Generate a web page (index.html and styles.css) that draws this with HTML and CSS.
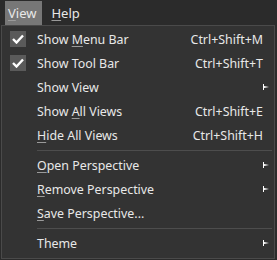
FILE: index.html
```html
<!DOCTYPE html>
<html lang="en">
<head>
    <meta charset="UTF-8">
    <title>View Menu</title>
    <link rel="stylesheet" href="styles.css">
</head>
<body>

<div class="menubar">
    <span class="top-item active"><u>V</u>iew</span>
    <span class="top-item"><u>H</u>elp</span>
</div>

<div class="popup">
    <div class="item">
        <span class="check"><svg width="12" height="10" viewBox="0 0 12 10"><path d="M1 5 L4.5 8.5 L11 1.5" fill="none" stroke="#fff" stroke-width="2.4"/></svg></span>
        <span class="label">Show <u>M</u>enu Bar</span>
        <span class="key">Ctrl+Shift+M</span>
    </div>
    <div class="item">
        <span class="check"><svg width="12" height="10" viewBox="0 0 12 10"><path d="M1 5 L4.5 8.5 L11 1.5" fill="none" stroke="#fff" stroke-width="2.4"/></svg></span>
        <span class="label">Show Tool Bar</span>
        <span class="key">Ctrl+Shift+T</span>
    </div>
    <div class="item">
        <span class="label">Show View</span>
        <span class="arrow"><svg width="6" height="6" viewBox="0 0 6 6"><path d="M0 0 H1 V2 L6 3 L1 4 V6 H0 Z" fill="#fff"/></svg></span>
    </div>
    <div class="item">
        <span class="label">Show <u>A</u>ll Views</span>
        <span class="key">Ctrl+Shift+E</span>
    </div>
    <div class="item">
        <span class="label"><u>H</u>ide All Views</span>
        <span class="key">Ctrl+Shift+H</span>
    </div>
    <div class="separator"></div>
    <div class="item">
        <span class="label"><u>O</u>pen Perspective</span>
        <span class="arrow"><svg width="6" height="6" viewBox="0 0 6 6"><path d="M0 0 H1 V2 L6 3 L1 4 V6 H0 Z" fill="#fff"/></svg></span>
    </div>
    <div class="item">
        <span class="label"><u>R</u>emove Perspective</span>
        <span class="arrow"><svg width="6" height="6" viewBox="0 0 6 6"><path d="M0 0 H1 V2 L6 3 L1 4 V6 H0 Z" fill="#fff"/></svg></span>
    </div>
    <div class="item">
        <span class="label"><u>S</u>ave Perspective...</span>
    </div>
    <div class="separator"></div>
    <div class="item">
        <span class="label">Theme</span>
        <span class="arrow"><svg width="6" height="6" viewBox="0 0 6 6"><path d="M0 0 H1 V2 L6 3 L1 4 V6 H0 Z" fill="#fff"/></svg></span>
    </div>
</div>

</body>
</html>
```

FILE: styles.css
```css
body {
    margin: 0;
    padding: 0;
    width: 277px;
    height: 260px;
    background-color: #2b2b2b;
    font-family: 'Noto Sans', 'Open Sans', Arial, sans-serif;
    font-size: 12.4px;
    color: #e8e8e8;
    overflow: hidden;
}
u {
    text-decoration-color: #9a9a9a;
    text-underline-offset: 2px;
}
.menubar {
    display: flex;
    height: 25px;
    padding-left: 5px;
    gap: 6px;
}
.top-item {
    display: flex;
    align-items: center;
    padding: 0 6px 0 3px;
    margin-top: 1px;
    font-size: 13px;
}
.top-item.active {
    background-color: #777;
}
.popup {
    margin-left: 1px;
    width: 272px;
    height: 231px;
    padding-top: 1px;
    background-color: #333;
    border: 1px solid #4a4a4a;
}
.item {
    display: flex;
    align-items: center;
    height: 24px;
    position: relative;
    padding-left: 35px;
    padding-right: 11px;
}
.label {
    flex: 1;
}
.key {
    text-align: right;
}
.check {
    position: absolute;
    left: 8px;
    top: 4px;
    width: 16px;
    height: 16px;
    background-color: #5a5a5a;
    display: flex;
    align-items: center;
    justify-content: center;
}
.arrow {
    display: flex;
    margin-right: -6px;
}
.separator {
    height: 1px;
    margin: 3px 2px 2px 35px;
    background-color: #4d4d4d;
}
```
